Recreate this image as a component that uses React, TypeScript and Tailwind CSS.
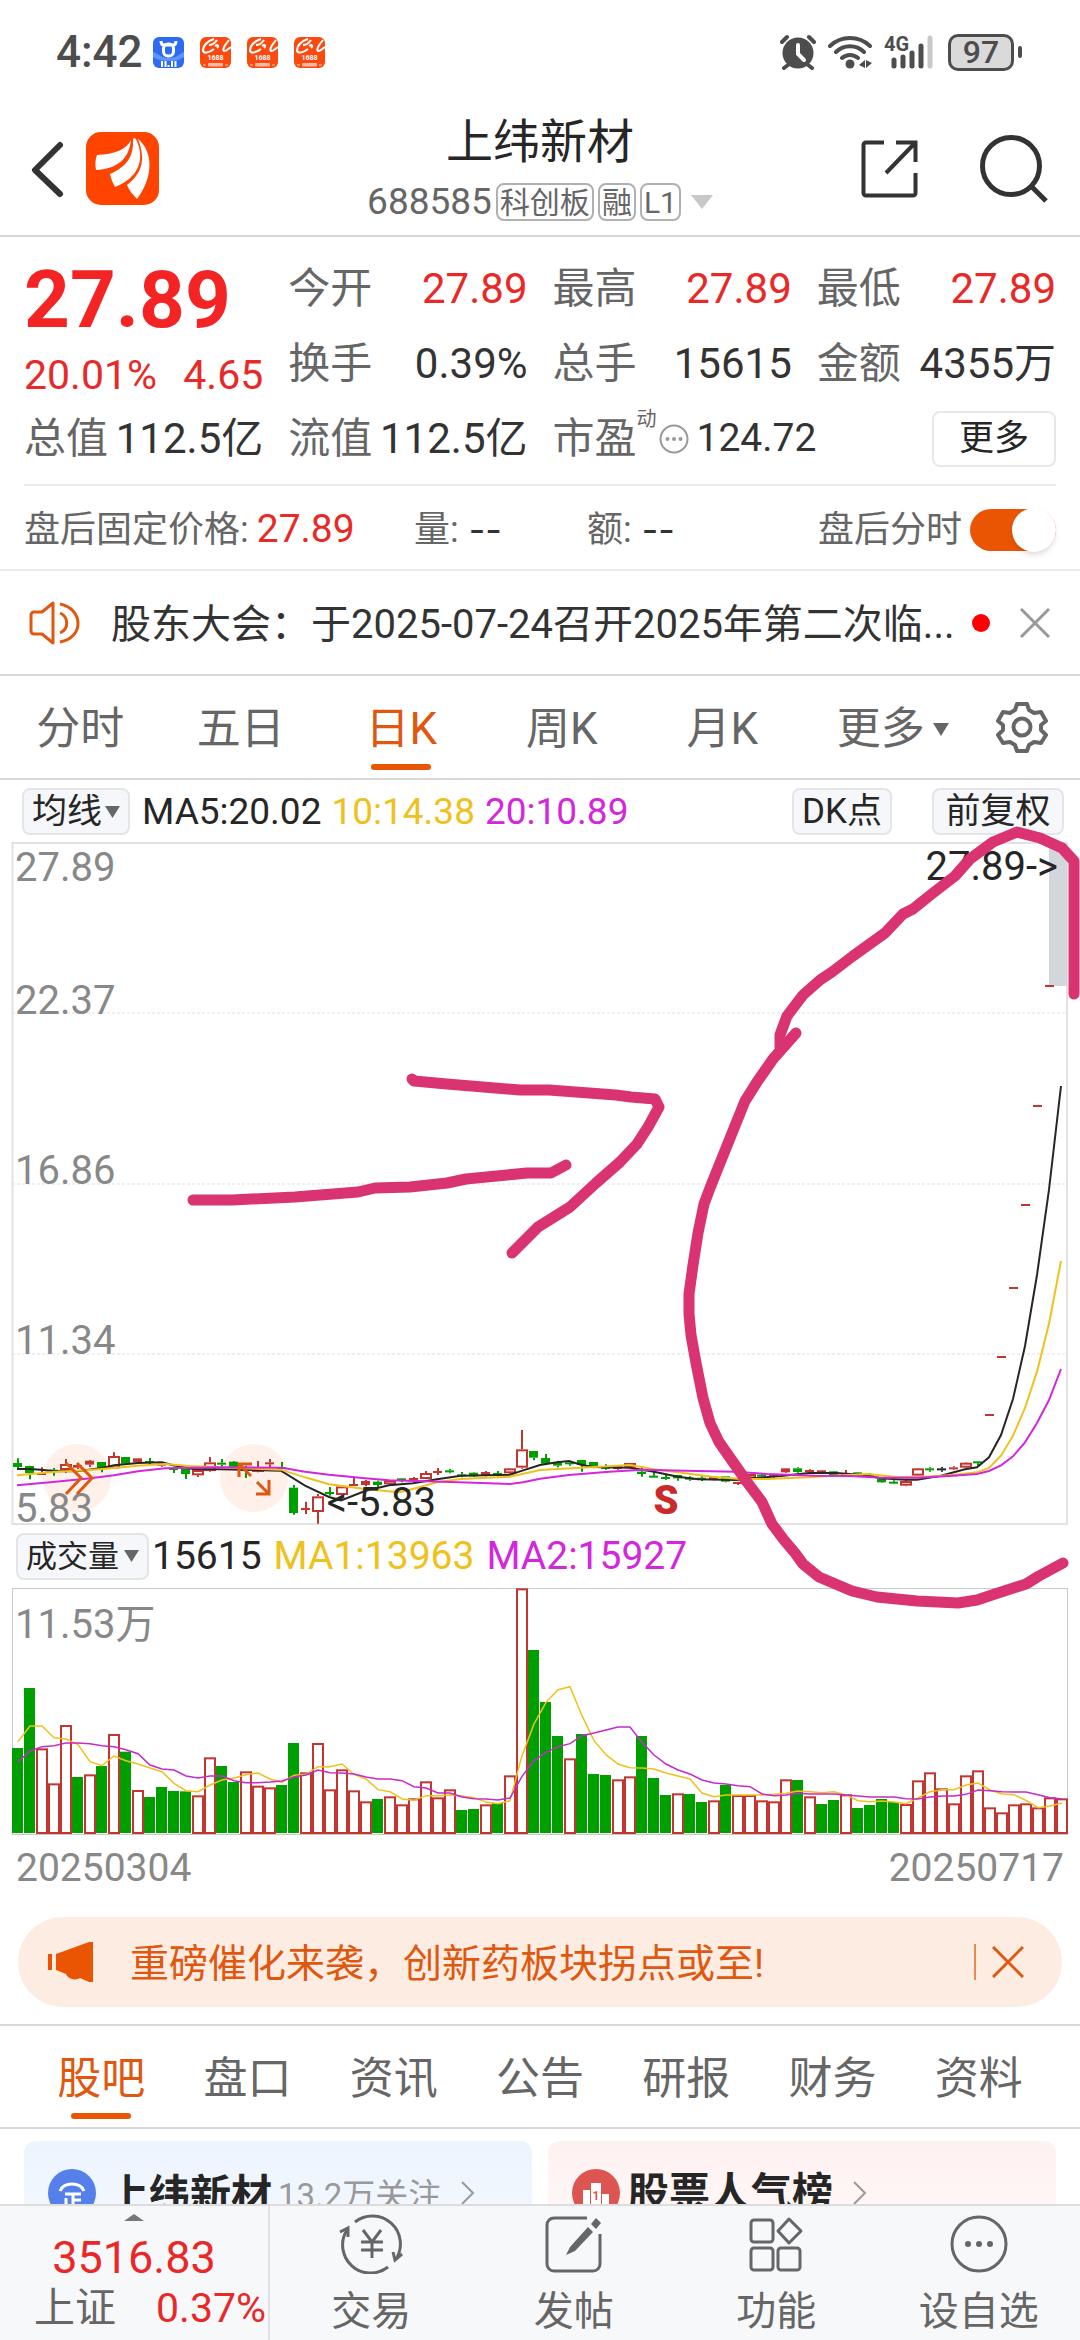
import { useState } from 'react';
import type { ReactNode } from 'react';

const UP = '#c23531';
const DOWN = '#009f00';

// Bars are 12 units apart, the first one is centred at 18
const barX = (i: number) => 18 + i * 12;

// [kind, high, low, body top, body bottom], in thirds of a unit below y = 1400
const candles: [string, number, number, number, number][] = [
  ['g', 178, 209, 192, 204],
  ['g', 200, 241, 201, 222],
  ['r', 205, 228, 222, 226],
  ['g', 207, 230, 212, 216],
  ['r', 180, 222, 195, 213],
  ['r', 196, 210, 198, 206],
  ['r', 183, 204, 185, 197],
  ['g', 189, 220, 189, 208],
  ['r', 160, 210, 171, 208],
  ['g', 174, 196, 174, 194],
  ['r', 177, 192, 178, 190],
  ['g', 177, 195, 186, 192],
  ['r', 190, 203, 193, 200],
  ['g', 203, 222, 207, 211],
  ['g', 208, 240, 208, 225],
  ['r', 213, 234, 213, 229],
  ['r', 174, 218, 190, 216],
  ['g', 180, 202, 191, 197],
  ['g', 186, 212, 188, 206],
  ['g', 200, 237, 204, 216],
  ['r', 186, 220, 204, 219],
  ['r', 180, 206, 190, 196],
  ['g', 189, 220, 204, 208],
  ['g', 258, 347, 266, 342],
  ['r', 308, 345, 327, 333],
  ['r', 285, 374, 292, 339],
  ['g', 264, 290, 279, 285],
  ['r', 262, 290, 262, 288],
  ['r', 237, 260, 255, 260],
  ['r', 243, 262, 246, 258],
  ['g', 245, 265, 248, 258],
  ['r', 243, 258, 243, 256],
  ['g', 237, 250, 238, 243],
  ['r', 234, 248, 237, 245],
  ['r', 216, 240, 222, 240],
  ['r', 207, 228, 216, 222],
  ['g', 210, 223, 214, 218],
  ['g', 219, 235, 226, 228],
  ['g', 220, 234, 221, 232],
  ['r', 216, 232, 219, 231],
  ['g', 216, 232, 222, 228],
  ['r', 207, 225, 208, 223],
  ['r', 93, 209, 151, 206],
  ['g', 156, 184, 156, 176],
  ['g', 165, 194, 177, 194],
  ['g', 185, 205, 190, 200],
  ['g', 186, 200, 190, 195],
  ['g', 183, 218, 183, 198],
  ['g', 189, 208, 189, 206],
  ['g', 196, 212, 204, 208],
  ['r', 198, 212, 200, 210],
  ['r', 192, 208, 192, 206],
  ['g', 201, 233, 218, 225],
  ['g', 218, 236, 230, 233],
  ['g', 226, 242, 234, 237],
  ['g', 228, 245, 228, 238],
  ['g', 232, 245, 236, 239],
  ['g', 232, 246, 236, 240],
  ['r', 232, 244, 233, 242],
  ['g', 232, 250, 232, 248],
  ['r', 248, 258, 249, 254],
  ['r', 224, 240, 225, 238],
  ['g', 222, 236, 227, 231],
  ['r', 227, 237, 228, 234],
  ['r', 207, 222, 208, 220],
  ['g', 205, 221, 208, 219],
  ['r', 211, 220, 213, 218],
  ['r', 213, 222, 214, 220],
  ['g', 216, 234, 217, 228],
  ['r', 213, 234, 222, 226],
  ['g', 219, 230, 220, 226],
  ['g', 222, 232, 226, 229],
  ['g', 238, 251, 240, 250],
  ['g', 244, 255, 248, 252],
  ['r', 244, 262, 246, 260],
  ['r', 207, 232, 208, 230],
  ['g', 205, 218, 208, 213],
  ['k', 204, 218, 208, 213],
  ['r', 202, 212, 205, 209],
  ['r', 190, 208, 191, 206],
  ['g', 186, 200, 187, 192],
];

// One price days: only a dash is left of the candle
const limitUps = [1416, 1358, 1289, 1206, 1107, 987];

const ma5 =
  '17,210 29,210 41,212 53,216 77,217 102,207 114,199 138,192 162,190 172,198 193,210 220,211 244,212 281,215 305,260 329,294 341,304 365,276 389,259 413,253 437,241 461,230 486,229 510,227 520,217 540,198 557,190 569,186 581,197 593,204 630,206 654,218 678,233 698,241 736,243 753,238 781,231 809,222 836,222 864,228 881,238 905,242 917,242 941,230 965,211 977,205 989,175 1001,108 1013,0 1025,-159 1037,-372 1049,-628 1061,-939';
const ma10 =
  '17,229 53,219 86,214 114,207 138,200 165,195 189,201 210,203 241,208 281,212 305,235 329,256 365,270 399,280 410,272 437,250 461,240 510,233 540,213 581,206 630,198 654,211 678,220 712,233 740,240 767,240 809,235 833,230 867,225 895,233 917,235 953,228 977,220 989,207 1001,170 1013,110 1025,27 1037,-82 1049,-226 1061,-414';
const ma20 =
  '17,259 53,249 86,239 114,229 138,217 165,208 220,205 282,206 305,218 329,227 365,238 389,244 427,247 482,252 510,255 523,250 540,239 569,228 609,218 643,212 685,215 736,218 767,225 815,230 850,231 881,236 919,236 953,230 977,225 989,216 1001,199 1013,172 1025,130 1037,72 1049,3 1061,-90';

// Top of each volume bar, the base line is 763
const volumes =
  'g507 g327 r508 r613 r438 g594 r586 g561 r465 g518 r633 g654 g624 g636 g637 r649 r535 g561 g609 r577 r620 r625 g618 g492 r580 r492 r631 r571 r634 r667 g660 r652 r676 r658 r607 r655 r631 g693 g690 r676 g672 r589 r28 g213 g369 g471 r538 g465 g585 g588 r601 r592 g471 g597 g648 r643 g645 g669 r664 g618 r648 r648 r664 r667 r601 g603 r652 g675 g663 r646 g687 g678 g660 g669 r675 r604 r580 r628 r673 r589 r574 r685 r700 r676 r673 r685 r655 r658'.split(' ');
const volMa1 = [
  488, 441, 441, 476, 480, 497, 548, 560, 531, 545, 555, 567, 578, 613, 635, 638, 618, 603, 597, 587, 582, 600,
  610, 589, 586, 563, 563, 555, 586, 600, 632, 638, 660, 664, 650, 650, 648, 651, 656, 669, 674, 665, 530, 435,
  370, 332, 323, 410, 485, 527, 555, 566, 567, 570, 582, 591, 600, 642, 653, 648, 648, 648, 648, 646, 643, 636,
  638, 641, 638, 648, 665, 668, 666, 669, 674, 657, 638, 632, 632, 618, 612, 633, 645, 647, 664, 686, 681, 672,
];
const volMa2 = [
  549, 516, 503, 500, 492, 492, 494, 500, 503, 512, 524, 558, 570, 573, 591, 597, 591, 591, 605, 611, 611, 609,
  606, 594, 588, 573, 581, 582, 585, 594, 600, 600, 605, 623, 627, 642, 642, 654, 659, 660, 663, 657, 592, 545,
  520, 503, 494, 470, 462, 453, 444, 444, 490, 528, 555, 573, 585, 603, 612, 615, 620, 623, 645, 650, 648, 643,
  645, 645, 645, 648, 651, 654, 654, 654, 659, 660, 654, 651, 651, 646, 633, 635, 638, 639, 639, 647, 656, 660,
];

const pricePoints = (s: string) =>
  s
    .split(' ')
    .map((p) => {
      const [x, y] = p.split(',').map(Number);
      return `${x},${1400 + y / 3}`;
    })
    .join(' ');

const volPoints = (list: number[]) => list.map((v, i) => `${barX(i)},${v / 3}`).join(' ');

function OrangeAppIcon() {
  return (
    <svg viewBox="0 0 31 31" className="size-[31px]">
      <rect width="31" height="31" rx="6" fill="#fb4a10" />
      <path d="M14 2C7 4 3 9 3 13c0 4 6 3 11-1M9 8c3 0 6-2 8-5" fill="none" stroke="#fff" strokeWidth="2.2" />
      <path d="M15 9c3-2 4 0 2 2M29 3c-4 5-7 9-5 11 1 1 4-2 7-4" fill="none" stroke="#fff" strokeWidth="2" />
      <text x="15.5" y="23" fontSize="7" fontWeight="700" fill="#fff" textAnchor="middle">1688</text>
      <path d="M3 28h3M25 28h3" stroke="#ffd0b0" strokeWidth="1" />
      <rect x="8" y="26" width="15" height="3.6" rx="1" fill="#f9b9a8" />
    </svg>
  );
}

function StatusBar() {
  return (
    <div className="flex h-24 items-center pt-2 pr-[58px] pl-14 text-[#4d4d4d]">
      <span className="text-[44px] leading-none font-medium">4:42</span>
      <div className="ml-2.5 flex gap-4">
        <svg viewBox="0 0 31 31" className="size-[31px]">
          <rect width="31" height="31" rx="6" fill="#2f6bf2" />
          <path d="M0 15c6 2 8 6 16 6s10-4 15-6v5c-5 3-9 4-15 4S5 23 0 20z" fill="#5f95ff" />
          <path d="M8 4c0 3 1 4 3 4h9c2 0 3-1 3-4" fill="none" stroke="#fff" strokeWidth="3" />
          <rect x="10.5" y="7" width="10" height="12" rx="4.5" fill="none" stroke="#fff" strokeWidth="3" />
          <path d="M9 24v6M12.500 24v6M19 24v6M22.500 24v6M15.500 28v2" stroke="#fff" strokeWidth="2" />
        </svg>
        <OrangeAppIcon />
        <OrangeAppIcon />
        <OrangeAppIcon />
      </div>
      <div className="ml-auto flex items-center">
        <svg viewBox="0 0 36 36" className="size-9" fill="none" stroke="#4d4d4d" strokeLinecap="round">
          <circle cx="18" cy="19" r="15.500" fill="#4d4d4d" stroke="none" />
          <path d="M2 8l5-5M34 8l-5-5M8 31l-4 3M28 31l4 3" strokeWidth="4" />
          <path d="M18 11v9l6 6" stroke="#fff" strokeWidth="4" />
        </svg>
        <svg viewBox="0 0 44 36" className="ml-3 h-9 w-11" fill="none" stroke="#4d4d4d" strokeLinecap="round">
          <path d="M2 12a29 29 0 0 1 40 0M8 18a20 20 0 0 1 28 0M14 24a12 12 0 0 1 16 0" strokeWidth="4" />
          <circle cx="22" cy="30" r="4.500" fill="#4d4d4d" stroke="none" />
          <path d="M31 31l6-5v8zM44 29l-6 5v-8z" fill="#4d4d4d" stroke="none" />
        </svg>
        <svg
          viewBox="0 0 52 36"
          className="ml-3 h-9 w-[52px] overflow-visible"
          stroke="#4d4d4d"
          strokeWidth="5"
          strokeLinecap="round"
        >
          <text x="0" y="17" fontSize="20" fontWeight="700" fill="#4d4d4d" stroke="none">4G</text>
          <path d="M10 26v6M19 23v9M28 19v13M37 12v20" />
          <path d="M46 4v28" stroke="#c8c8c8" />
        </svg>
        <div className="ml-3 flex h-[37px] w-[66px] items-center justify-center rounded-[10px] border-[3px] border-[#4d4d4d] bg-[#dadada]">
          <span className="text-[32px] leading-none font-medium">97</span>
        </div>
        <span className="ml-1 h-3 w-1 rounded-full bg-[#4d4d4d]" />
      </div>
    </div>
  );
}

function Tag({ children }: { children: ReactNode }) {
  return (
    <span className="flex h-[38px] items-center rounded-lg border-2 border-[#b0b0b0] px-0.5 pt-0.5 text-[30px] leading-none">
      {children}
    </span>
  );
}

function Header() {
  return (
    <header className="grid h-[141px] grid-cols-[1fr_auto_1fr] items-center border-b-2 border-[#d8d8d8] px-[30px] pt-1.5">
      <div className="flex items-center">
        <button aria-label="返回">
          <svg viewBox="0 0 36 60" className="h-[60px] w-9" fill="none" stroke="#333" strokeWidth="6">
            <path d="M30 6L5 31l25 24" strokeLinecap="round" strokeLinejoin="round" />
          </svg>
        </button>
        <a href="#home" aria-label="首页" className="ml-5">
          <svg viewBox="0 0 73 73" className="size-[73px]">
            <rect width="73" height="73" rx="15" fill="#ff4400" />
            <g fill="#fff">
              <path d="M45 8C40 18 28 22 11 23c-2 5-2 10-1 15C30 37 43 28 45 8z" />
              <path d="M47 7c1 18-7 28-23 35 1 5 3 9 5 13C52 46 60 28 50 7c-1-1-3-1-3 0z" />
              <path d="M52 7c7 18 6 33-11 46 2 5 6 10 10 14C67 46 68 20 52 7z" />
            </g>
          </svg>
        </a>
      </div>
      <div className="flex flex-col items-center gap-4">
        <h1 className="text-[47px] leading-[50px] text-[#262626]">上纬新材</h1>
        <button className="flex items-center gap-1 text-[37px] leading-none text-[#666]">
          688585
          <Tag>科创板</Tag>
          <Tag>融</Tag>
          <Tag>L1</Tag>
          <svg viewBox="0 0 22 14" className="ml-1.5 h-3.5 w-[22px]">
            <path d="M0 0h22L11 14z" fill="#c8c8c8" />
          </svg>
        </button>
      </div>
      <div className="flex items-center justify-end gap-[61px]">
        <button aria-label="分享">
          <svg viewBox="0 0 58 58" className="size-[58px]" fill="none" stroke="#333" strokeWidth="4">
            <path d="M23 2.500H5a2.500 2.500 0 0 0-2.500 2.500v48a2.500 2.500 0 0 0 2.500 2.500h47a2.500 2.500 0 0 0 2.500-2.500V33" />
            <path d="M35 2.500h19.500V22M54 3L25 33" />
          </svg>
        </button>
        <button aria-label="搜索">
          <svg viewBox="0 0 70 68" className="h-[68px] w-[70px]" fill="none" stroke="#333" strokeWidth="5">
            <circle cx="31" cy="31" r="28.500" />
            <path d="M51 51l15 15" />
          </svg>
        </button>
      </div>
    </header>
  );
}

function Stat({ label, value, red }: { label: string; value: string; red?: boolean }) {
  return (
    <div className="flex h-[75px] items-center justify-between">
      <span className="text-[#666]">{label}</span>
      <span className={red ? 'text-[#e92828]' : 'text-[#333]'}>{value}</span>
    </div>
  );
}

function Quote() {
  return (
    <section className="mx-6 border-b-2 border-[#ececec] pt-3.5 pb-2">
      <div className="grid grid-cols-4 gap-x-[25px] text-[42px] leading-none whitespace-nowrap">
        <div className="row-span-2 flex flex-col text-[#f42424]">
          <span className="text-[80px] leading-[98px] font-bold">27.89</span>
          <div className="flex justify-between pt-1.5 text-[41px] text-[#e92828]">
            <span>20.01%</span>
            <span>4.65</span>
          </div>
        </div>
        <Stat label="今开" value="27.89" red />
        <Stat label="最高" value="27.89" red />
        <Stat label="最低" value="27.89" red />
        <Stat label="换手" value="0.39%" />
        <Stat label="总手" value="15615" />
        <Stat label="金额" value="4355万" />
        <Stat label="总值" value="112.5亿" />
        <Stat label="流值" value="112.5亿" />
        <div className="col-span-2 flex h-[75px] items-center">
          <span className="text-[#666]">市盈</span>
          <span className="self-start pt-2 text-[20px] text-[#666]">动</span>
          <svg viewBox="0 0 30 30" className="ml-0.5 size-[30px]" fill="#999">
            <circle cx="15" cy="15" r="13.500" fill="none" stroke="#999" strokeWidth="2" />
            <circle cx="8.500" cy="15" r="2" />
            <circle cx="15" cy="15" r="2" />
            <circle cx="21.500" cy="15" r="2" />
          </svg>
          <span className="ml-2 text-[39px] text-[#333]">124.72</span>
          <button className="ml-auto h-14 w-[124px] rounded-lg border-2 border-[#e8e8e8] text-[35px] text-[#262626]">
            更多
          </button>
        </div>
      </div>
    </section>
  );
}

function AfterHours() {
  const [on, setOn] = useState(true);
  return (
    <section className="grid h-[85px] grid-cols-[390fr_173fr_231fr_238fr] items-center border-b-2 border-[#ececec] px-6 pt-1 text-[36px] leading-none whitespace-nowrap text-[#666]">
      <span className="flex items-center gap-2">
        盘后固定价格: <b className="text-[39px] font-normal text-[#e92828]">27.89</b>
      </span>
      <span className="flex gap-2.5">
        量: <b className="font-['Inter'] font-normal text-[#333]">--</b>
      </span>
      <span className="flex gap-2.5">
        额: <b className="font-['Inter'] font-normal text-[#333]">--</b>
      </span>
      <label className="flex items-center justify-between">
        盘后分时
        <input type="checkbox" className="peer sr-only" checked={on} onChange={() => setOn(!on)} />
        <span className="flex h-[42px] w-[86px] items-center rounded-full bg-[#ccc] peer-checked:justify-end peer-checked:bg-[#ea5504]">
          <span className="size-11 rounded-full bg-white shadow-md" />
        </span>
      </label>
    </section>
  );
}

function Notice() {
  return (
    <section className="flex h-[105px] items-center border-b-2 border-[#d8d8d8] pr-[30px] pl-7">
      <svg viewBox="0 0 54 46" className="h-[46px] w-[54px] shrink-0" fill="none" stroke="#e0570f" strokeWidth="3">
        <path d="M25 3v40l-11-9H6a3 3 0 0 1-3-3V15a3 3 0 0 1 3-3h8z" strokeLinejoin="round" />
        <path d="M32 13c9 4 9 16 0 20M32 4c24 5 24 34 0 38" />
      </svg>
      <a href="#notice" className="ml-[29px] pt-1 text-[40px] leading-none whitespace-nowrap text-[#333]">
        股东大会：于2025-07-24召开2025年第二次临...
      </a>
      <span className="ml-auto size-[18px] rounded-full bg-[#f00]" />
      <button aria-label="关闭" className="ml-[30px]">
        <svg viewBox="0 0 30 30" className="size-[30px]" stroke="#999" strokeWidth="3">
          <path d="M1 1l28 28M29 1L1 29" />
        </svg>
      </button>
    </section>
  );
}

function Tab({ label, active, arrow }: { label: string; active?: boolean; arrow?: boolean }) {
  return (
    <button
      role="tab"
      aria-selected={!!active}
      className={`relative flex flex-1 items-center justify-center pt-1 text-[44px] leading-none whitespace-nowrap ${
        active ? 'text-[#e0570f]' : 'text-[#666]'
      } ${arrow ? 'pl-5' : ''}`}
    >
      {label}
      {arrow && (
        <svg viewBox="0 0 16 13" className="ml-2 h-[13px] w-4">
          <path d="M0 0h16L8 13z" fill="#666" />
        </svg>
      )}
      {active && (
        <span className="absolute bottom-2 left-1/2 h-1.5 w-[60px] -translate-x-1/2 rounded-full bg-[#ea5504]" />
      )}
    </button>
  );
}

function PeriodTabs() {
  return (
    <nav role="tablist" className="flex h-[104px] border-b-2 border-[#d8d8d8]">
      <div className="grid flex-1 grid-cols-6">
        <Tab label="分时" />
        <Tab label="五日" />
        <Tab label="日K" active />
        <Tab label="周K" />
        <Tab label="月K" />
        <Tab label="更多" arrow />
      </div>
      <button aria-label="设置" className="flex w-[117px] items-center justify-center">
        <svg viewBox="0 0 52 52" className="size-[52px]" fill="none" stroke="#666" strokeWidth="4" strokeLinejoin="round">
          <path d="M21 3h10l2 6 5 3 7-1 5 9-5 4v5l5 5-5 8-7-1-5 3-2 6H21l-2-6-5-3-7 1-5-8 5-5v-5l-5-4 5-9 7 1 5-3z" />
          <circle cx="26" cy="26" r="8.500" />
        </svg>
      </button>
    </nav>
  );
}

function Picker({ label, name, className }: { label: string; name: string; className: string }) {
  return (
    <label className={`flex h-[47px] items-center rounded-lg border-2 border-[#e3e5e8] bg-[#f6f7fa] ${className}`}>
      <select aria-label={name} className="appearance-none leading-none text-[#262626]">
        <option>{label}</option>
      </select>
      <svg viewBox="0 0 15 12" className="ml-auto h-3 w-[15px]">
        <path d="M0 0h15L7.500 12z" fill="#666" />
      </svg>
    </label>
  );
}

function PriceChart() {
  return (
    <svg viewBox="0 840 1080 690" className="block w-full overflow-visible" fontSize="40" role="img" aria-label="日K线">
      <circle cx="77" cy="1479" r="34" fill="#fff0e9" />
      <circle cx="254" cy="1479" r="34" fill="#fff0e9" />
      <g stroke="#ececec" strokeWidth="1.500" strokeDasharray="3 2">
        <path d="M12 1014H1067M12 1185H1067M12 1355H1067" />
      </g>
      <rect x="12.500" y="844" width="1054.500" height="681" fill="none" stroke="#e2e2e2" strokeWidth="2" />
      <rect x="1049" y="845" width="18" height="142" fill="#d3d6db" />
      <g fill="#888">
        <text x="15" y="882">27.89</text>
        <text x="15" y="1015">22.37</text>
        <text x="15" y="1185">16.86</text>
        <text x="15" y="1355">11.34</text>
        <text x="15" y="1523">5.83</text>
      </g>
      {candles.map(([kind, high, low, top, bottom], i) => {
        const x = barX(i);
        const color = kind === 'r' ? UP : kind === 'g' ? DOWN : '#262626';
        const y1 = 1400 + top / 3;
        const h = Math.max((bottom - top) / 3, 2);
        const hollow = kind === 'r' && h > 4;
        return (
          <g key={i} stroke={color} strokeWidth="2">
            <path d={`M${x} ${1400 + high / 3}V${y1}M${x} ${y1 + h}V${1400 + low / 3}`} />
            {hollow ? (
              <rect x={x - 5} y={y1 + 1} width="10" height={h - 2} fill="#fff" />
            ) : (
              <rect x={x - 5} y={y1} width="9" height={h} fill={color} stroke="none" />
            )}
          </g>
        );
      })}
      {limitUps.map((y, i) => (
        <path key={y} d={`M${barX(81 + i) - 5} ${y}h9`} stroke={UP} strokeWidth="2" />
      ))}
      <g fill="none" strokeWidth="2">
        <polyline points={pricePoints(ma5)} stroke="#262626" />
        <polyline points={pricePoints(ma10)} stroke="#efc11c" />
        <polyline points={pricePoints(ma20)} stroke="#d327db" />
      </g>
      <g fill="none" stroke="#e0570f" strokeWidth="3">
        <path d="M66 1464l15 15-15 16M77 1464l15 15-15 16" />
        <path d="M252 1465h-13v13M239 1465l12 12M256 1495h13v-14M269 1495l-12-12" />
      </g>
      <text x="436" y="1517" textAnchor="end" fill="#262626">&lt;-5.83</text>
      <text x="1058" y="881" textAnchor="end" fill="#262626">27.89-&gt;</text>
      <text x="666" y="1515" textAnchor="middle" fontWeight="900" fill="#cb2a2a">S</text>
    </svg>
  );
}

function VolumeChart() {
  return (
    <svg viewBox="0 0 1080 258" className="block w-full" fontSize="40" role="img" aria-label="成交量">
      <rect x="12.500" y="9.500" width="1055" height="246" fill="none" stroke="#c8c8c8" />
      <text x="15" y="59" fill="#888">11.53万</text>
      {volumes.map((v, i) => {
        const y = Number(v.slice(1)) / 3;
        return v[0] === 'g' ? (
          <rect key={i} x={barX(i) - 6} y={y} width="11" height={254 - y} fill={DOWN} />
        ) : (
          <rect key={i} x={barX(i) - 5} y={y + 1} width="10" height={253 - y} fill="#fff" stroke={UP} strokeWidth="2" />
        );
      })}
      <g fill="none" strokeWidth="1.500">
        <polyline points={volPoints(volMa1)} stroke="#efc11c" />
        <polyline points={volPoints(volMa2)} stroke="#c42bcc" />
      </g>
    </svg>
  );
}

// Hand drawn marks on top of both charts
function Scribble() {
  return (
    <svg
      viewBox="0 780 1080 860"
      className="pointer-events-none absolute inset-x-0 top-0 w-full"
      fill="none"
      stroke="#da3372"
      strokeWidth="11"
      strokeLinecap="round"
      strokeLinejoin="round"
    >
      <polyline points="193,1200 232,1200 295,1197 358,1192 375,1188 410,1187 447,1183 466,1179 507,1175 527,1173 551,1173 566,1165" />
      <polyline points="412,1079 414,1081 447,1084 520,1090 549,1090 616,1095 631,1097 655,1099 659,1107 648,1127 637,1144 620,1162 596,1183 570,1207 538,1227 512,1253" />
      <polyline points="1074,994 1074,861 1062,848 1040,838 1017,832 993,842 970,859 955,876 933,893 913,909 903,914 885,933 853,956 832,972 820,980 803,995 787,1016 780,1035 780,1047" />
      <polyline points="796,1033 773,1059 757,1082 745,1101 720,1163 710,1188 704,1204 698,1233 693,1265 689,1294 689,1314 691,1335 696,1363 703,1398 710,1423 719,1442 733,1462 747,1482 762,1502 772,1524 784,1540 795,1553 803,1564 819,1577 852,1591 877,1597 917,1601 958,1603 977,1600 995,1594 1026,1584 1039,1576 1063,1563" />
    </svg>
  );
}

function Charts() {
  return (
    <section className="relative leading-none whitespace-nowrap">
      <div className="flex h-[59px] items-center pt-1 pr-4 pl-[22px] text-[37px]">
        <Picker label="均线" name="主图指标" className="w-[108px] pr-2 pl-2 text-[35px]" />
        <span className="ml-3 text-[#262626]">MA5:20.02</span>
        <span className="ml-2.5 text-[#efc11c]">10:14.38</span>
        <span className="ml-2.5 text-[#d327db]">20:10.89</span>
        <button className="ml-auto h-[47px] w-[100px] rounded-lg border-2 border-[#e3e5e8] bg-[#f6f7fa] text-[35px] leading-none text-[#262626]">
          DK点
        </button>
        <button className="ml-10 h-[47px] w-[132px] rounded-lg border-2 border-[#e3e5e8] bg-[#f6f7fa] text-[35px] leading-none text-[#262626]">
          前复权
        </button>
      </div>
      <PriceChart />
      <div className="flex h-[50px] items-center pt-1 pl-4 text-[39px]">
        <Picker label="成交量" name="副图指标" className="w-[133px] pr-2 pl-2 text-[31px]" />
        <span className="ml-[3px] text-[#262626]">15615</span>
        <span className="ml-3 text-[#efc11c]">MA1:13963</span>
        <span className="ml-3 text-[#d327db]">MA2:15927</span>
      </div>
      <VolumeChart />
      <div className="flex h-[58px] items-center justify-between px-4 pt-1 text-[39px] text-[#888]">
        <span>20250304</span>
        <span>20250717</span>
      </div>
      <Scribble />
    </section>
  );
}

function Promo() {
  return (
    <div className="mx-[18px] mt-[22px] mb-[17px] flex h-[90px] items-center rounded-full bg-[#fdece2] pr-[38px] pl-[30px] text-[#e0570f]">
      <svg viewBox="0 0 46 40" className="h-10 w-[46px]" fill="#ea5504">
        <path d="M0 12h4v16H0zM8 12L41 0h4v40h-4l-9-4c-5 3-12 1-14-4l-10-4z" />
      </svg>
      <a href="#promo" className="ml-9 pt-1 text-[39px] leading-none whitespace-nowrap">
        重磅催化来袭，创新药板块拐点或至!
      </a>
      <span className="ml-auto h-9 w-0.5 bg-[#e88a58]" />
      <button aria-label="关闭" className="ml-4">
        <svg viewBox="0 0 32 32" className="size-8" stroke="#e0570f" strokeWidth="3">
          <path d="M1 1l30 30M31 1L1 31" />
        </svg>
      </button>
    </div>
  );
}

function InfoTabs() {
  return (
    <nav role="tablist" className="flex h-[105px] border-y-2 border-[#d8d8d8] px-7">
      <Tab label="股吧" active />
      <Tab label="盘口" />
      <Tab label="资讯" />
      <Tab label="公告" />
      <Tab label="研报" />
      <Tab label="财务" />
      <Tab label="资料" />
    </nav>
  );
}

function Chevron() {
  return (
    <svg viewBox="0 0 14 24" className="ml-5 h-6 w-3.5" fill="none" stroke="#999" strokeWidth="2">
      <path d="M1 1l11 11L1 23" />
    </svg>
  );
}

function Cards() {
  return (
    <section className="grid grid-cols-2 gap-4 px-6 pt-3 leading-none whitespace-nowrap">
      <a href="#guba" className="flex h-[104px] items-center rounded-xl bg-linear-to-b from-[#ecf4fe] to-[#f6f9fe] pl-6">
        <svg viewBox="0 0 48 48" className="size-12" fill="none" stroke="#fff" strokeWidth="3">
          <circle cx="24" cy="24" r="24" fill="#5580ea" stroke="none" />
          <path d="M12 22c2-5 7-7 12-7s10 2 12 7" />
          <path d="M17 25h16M25 25v12M25 31h8M18 29v8M12 38h24" />
        </svg>
        <strong className="ml-3 pt-1 text-[41px] text-[#262626]">上纬新材</strong>
        <span className="ml-1.5 pt-1 text-[33px] text-[#999]">13.2万关注</span>
        <Chevron />
      </a>
      <a href="#rank" className="flex h-[104px] items-center rounded-xl bg-linear-to-b from-[#fef2f1] to-[#fff8f7] pl-6">
        <svg viewBox="0 0 48 48" className="size-12">
          <circle cx="24" cy="24" r="24" fill="#dc5550" />
          <path d="M11 21h8v15h-8zM19 14h10v22H19zM30 25h7v11h-7z" fill="#fff" />
          <path d="M18.500 21v15M29.500 21v15" stroke="#dc5550" />
          <text x="24" y="31" fontSize="12" fontWeight="700" textAnchor="middle" fill="#dc5550">1</text>
        </svg>
        <strong className="ml-2 text-[41px] text-[#262626]">股票人气榜</strong>
        <Chevron />
      </a>
    </section>
  );
}

function NavItem({ label, children }: { label: string; children: ReactNode }) {
  return (
    <button className="flex flex-1 flex-col items-center pt-2 text-[40px] leading-none text-[#666]">
      <svg viewBox="0 0 66 60" className="h-[60px] w-[66px]" fill="none" stroke="#666" strokeWidth="3">
        {children}
      </svg>
      <span className="mt-[18px]">{label}</span>
    </button>
  );
}

function BottomBar() {
  return (
    <footer className="flex h-[136px] shrink-0 border-t-2 border-[#dcdcdc] bg-[#f7f8fa] whitespace-nowrap">
      <a href="#index" className="flex w-1/4 flex-col items-center border-r-2 border-[#dfe1e6] pt-2 leading-none text-[#e92828]">
        <svg viewBox="0 0 20 7" className="h-[7px] w-5">
          <path d="M0 7L10 0l10 7z" fill="#777" />
        </svg>
        <span className="mt-3.5 text-[45px]">3516.83</span>
        <span className="mt-2 flex w-full justify-between pr-0.5 pl-[34px] text-[41px]">
          <span className="text-[#666]">上证</span>
          <span>0.37%</span>
        </span>
      </a>
      <NavItem label="交易">
        <path d="M17 8a28 28 0 0 1 41 37M50 53A28 28 0 0 1 9 16" />
        <path d="M2 18l8-4v9M64 40l-7 6-2-8" />
        <path d="M25 16l9 12 9-12M34 28v16M23 28h22M23 36h22" />
      </NavItem>
      <NavItem label="发帖">
        <path d="M46 4H13a7 7 0 0 0-7 7v39a7 7 0 0 0 7 7h39a7 7 0 0 0 7-7V20" />
        <path d="M29 33l18-20 5 5-18 19-9 4z" fill="#666" stroke="none" />
        <path d="M50 10l5-6 5 5-5 6z" fill="#666" stroke="none" />
      </NavItem>
      <NavItem label="功能">
        <rect x="8" y="6" width="22" height="22" rx="3" />
        <rect x="8" y="34" width="22" height="22" rx="3" />
        <rect x="35" y="34" width="22" height="22" rx="3" />
        <path d="M46 5l12 12-12 12-11-12z" strokeLinejoin="round" />
      </NavItem>
      <NavItem label="设自选">
        <circle cx="33" cy="30" r="27" />
        <g fill="#666" stroke="none">
          <circle cx="22" cy="30" r="3" />
          <circle cx="33" cy="30" r="3" />
          <circle cx="44" cy="30" r="3" />
        </g>
      </NavItem>
    </footer>
  );
}

export default function App() {
  return (
    <div className="flex h-screen flex-col overflow-hidden bg-white font-['Roboto','Noto_Sans_CJK_SC',sans-serif]">
      <main className="min-h-0 flex-1 overflow-hidden">
        <StatusBar />
        <Header />
        <Quote />
        <AfterHours />
        <Notice />
        <PeriodTabs />
        <Charts />
        <Promo />
        <InfoTabs />
        <Cards />
      </main>
      <BottomBar />
    </div>
  );
}
